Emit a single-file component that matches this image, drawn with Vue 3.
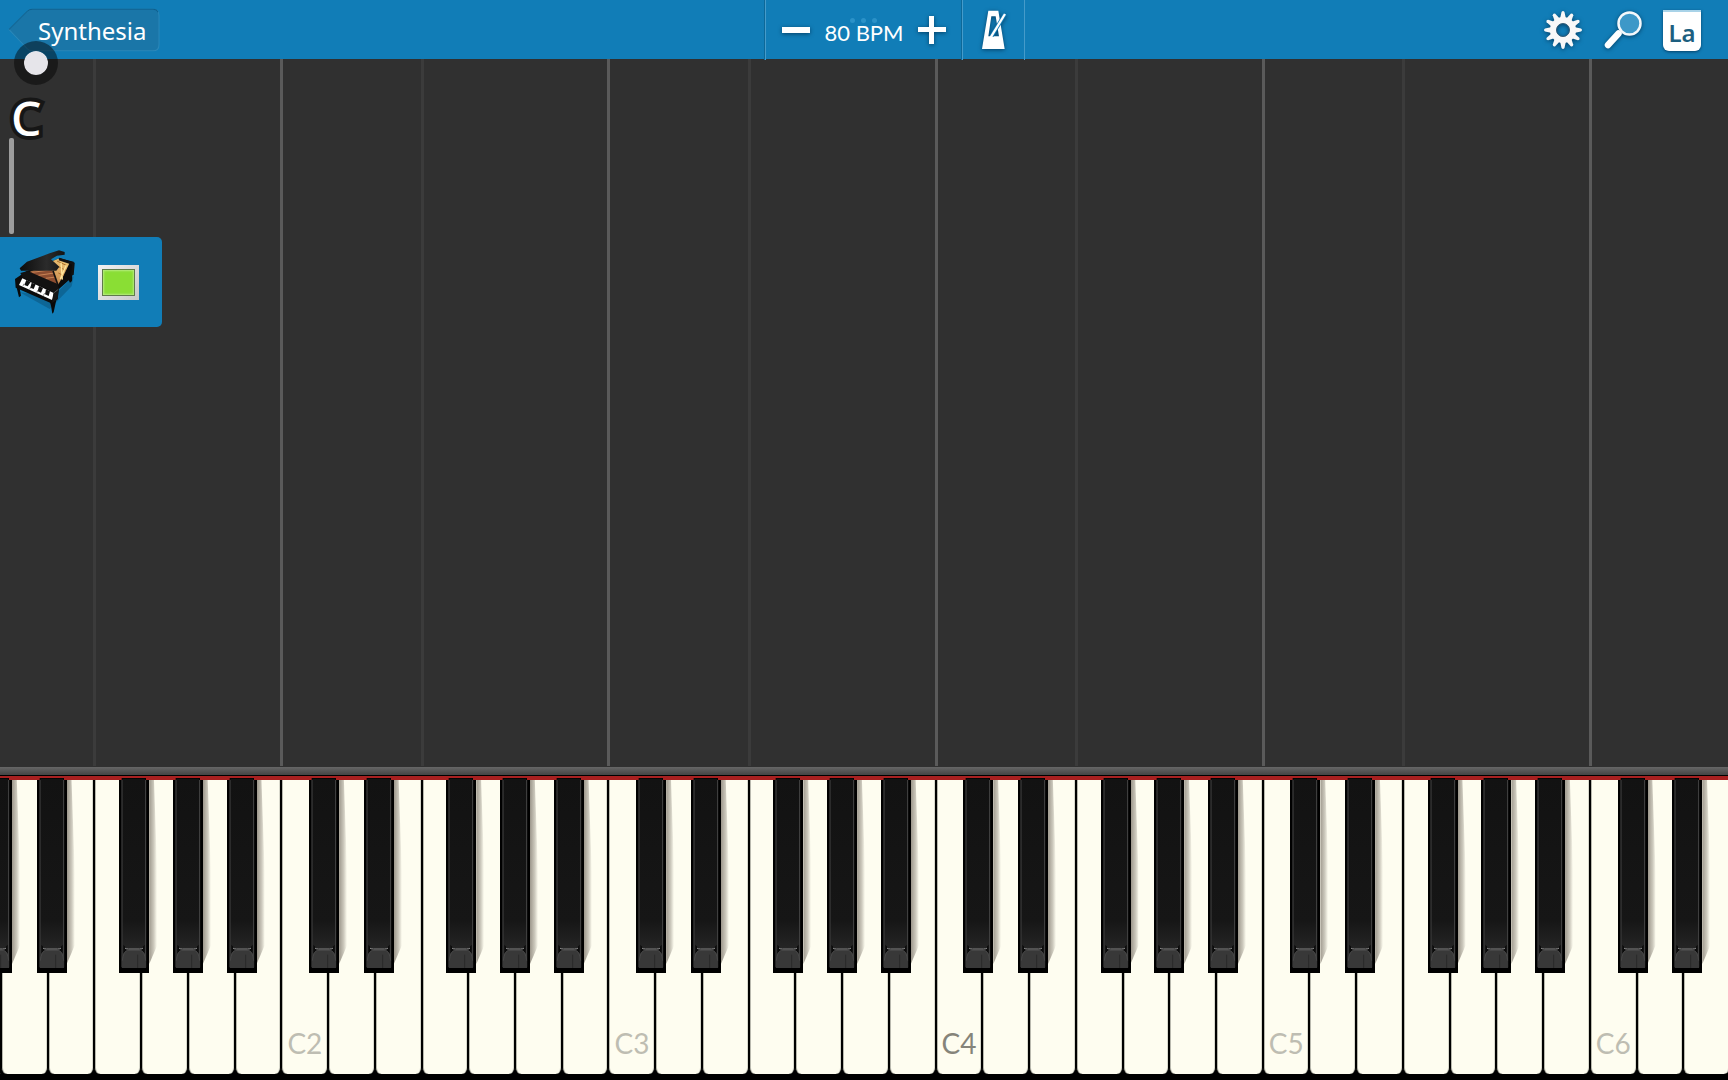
<script setup>
import { ref } from 'vue'

const bpm = ref(80)
const metronomeOn = ref(false)
const trackOn = ref(true)

const names = ['C', 'D', 'E', 'F', 'G', 'A', 'B']

// C1 is only a sliver on the left, the last key is E6
const keys = Array.from({ length: 38 }, (_, i) => {
  const name = names[i % 7]
  const octave = Math.floor(i / 7) + 1
  return {
    id: name + octave,
    name,
    octave,
    sharp: name !== 'E' && name !== 'B',
    label: name === 'C' && octave > 1 ? name + octave : ''
  }
})

// gear teeth, one every 30 degrees
const teeth = Array.from({ length: 12 }, (_, i) => i * 30)

function changeBpm(step) {
  bpm.value = Math.max(20, bpm.value + step)
}
</script>

<template>
  <div class="app">
    <header class="topbar">
      <div class="left">
        <button class="back" type="button">
          <svg class="back-shape" viewBox="0 0 150 43" aria-hidden="true">
            <path d="M1 21 L19 3 Q21 1 24 1 H143 Q149 1 149 7 V36 Q149 42 143 42 H24 Q21 42 19 40 Z" fill="#1a76a8" stroke="#2b88b9" stroke-width="1" />
            <path d="M1 21 L19 3 Q21 1 24 1 H143 Q147 1 148 4" fill="none" stroke="#0d5f8d" stroke-width="1" />
          </svg>
          <span>Synthesia</span>
        </button>
      </div>

      <div class="tempo">
        <button class="step" type="button" aria-label="Slower" @click="changeBpm(-5)">
          <svg width="28" height="28" viewBox="0 0 28 28"><path d="M0 11h28v6H0z" fill="#fff" /></svg>
        </button>
        <div class="bpm">
          <span class="dots"><i></i><i></i><i></i></span>
          <span>{{ bpm }} BPM</span>
        </div>
        <button class="step" type="button" aria-label="Faster" @click="changeBpm(5)">
          <svg width="28" height="28" viewBox="0 0 28 28"><path d="M0 11h11V0h5v11h12v5H16v12h-5V16H0z" fill="#fff" /></svg>
        </button>
      </div>

      <div class="right">
        <button class="metronome" type="button" aria-label="Metronome" @click="metronomeOn = !metronomeOn">
          <svg width="26" height="40" viewBox="692 30 78 120">
            <path fill="#fff" fill-rule="evenodd" d="M714 32H744L763 147H695ZM723 49L714 109H746L736 49Z" />
            <path d="M724 108L764 42" stroke="#117db7" stroke-width="12" />
            <path d="M721 112L764 42" stroke="#fff" stroke-width="7" />
          </svg>
        </button>
        <div class="tools">
          <button type="button" aria-label="Settings">
            <svg width="40" height="40" viewBox="-20 -20 40 40">
              <path v-for="a in teeth" :key="a" d="M-3 -11L-1.5 -18Q0 -20 1.5 -18L3 -11Z" :transform="`rotate(${a})`" fill="#f8f8f8" />
              <circle r="9.8" fill="none" stroke="#f8f8f8" stroke-width="6.5" />
              <circle r="6.5" fill="none" stroke="#355e78" stroke-width="1" />
            </svg>
          </button>
          <button type="button" aria-label="Search">
            <svg width="40" height="40" viewBox="0 0 40 40">
              <path d="M15.5 23.5L5 35" stroke="#fff" stroke-width="6.5" stroke-linecap="round" />
              <circle cx="26.5" cy="13.5" r="11" fill="#3d98c8" stroke="#f4f8fb" stroke-width="2.5" />
            </svg>
          </button>
          <button class="la" type="button">La</button>
        </div>
      </div>
    </header>

    <main class="field">
      <div class="lanes" aria-hidden="true">
        <div v-for="k in keys" :key="k.id" class="lane" :class="{ octave: k.name === 'C', fourth: k.name === 'F' }"></div>
      </div>

      <div class="chord">C</div>
      <div class="beat-line"></div>
      <section class="track">
        <svg class="piano" viewBox="40 358 192 198" role="img" aria-label="Grand piano">
          <defs>
            <linearGradient id="lid" x1="0" y1="0" x2="1" y2="0">
              <stop offset="0" stop-color="#0c0c0c" />
              <stop offset=".6" stop-color="#2b2b2b" />
              <stop offset="1" stop-color="#141414" />
            </linearGradient>
            <linearGradient id="wood" x1="0" y1="1" x2="1" y2="0">
              <stop offset="0" stop-color="#7a3f24" />
              <stop offset=".5" stop-color="#d39a5a" />
              <stop offset="1" stop-color="#f3cf7a" />
            </linearGradient>
          </defs>
          <path d="M60 488L150 538L216 470L222 440L160 500Z" fill="#0b5681" opacity=".6" />
          <path d="M206 430L218 430L217 454L211 459L207 452Z" fill="#090909" />
          <path d="M50 470L60 476L64 498L58 503L54 486Z" fill="#090909" />
          <path d="M150 514L170 510L162 548L158 552L154 528Z" fill="#090909" />
          <path d="M46 448L80 425L180 386L222 396L221 430L214 446L178 478L174 508L158 522L48 474Z" fill="#0b0b0b" />
          <path d="M84 430L150 398L176 387L210 399L192 437L176 464Z" fill="url(#wood)" />
          <path d="M84 430L150 412L168 440L172 464Z" fill="#8d4e31" />
          <path d="M98 428L158 420M116 437L164 430M138 446L168 442" stroke="#c98455" stroke-width="3" />
          <path d="M172 394L202 408M174 410L198 422M176 430L192 438" stroke="#ad6f2a" stroke-width="3" />
          <path d="M184 399L188 450M200 406L182 448" stroke="#ffe49a" stroke-width="4" />
          <path d="M60 416L82 396L150 371L178 362L195 367L195 375L172 378L154 389L179 411L170 423L64 423Z" fill="url(#lid)" />
          <path d="M178 388L221 402L218 436" fill="none" stroke="#111" stroke-width="8" />
          <path d="M160 423L174 464" stroke="#111" stroke-width="5" />
          <path d="M62 430L84 424L174 463L178 480L164 488L70 444Z" fill="#121212" />
          <path d="M68 446L162 490L157 511L58 466Z" fill="#fff" />
          <path d="M80 451L93 457L84 470L74 466Z M96 459L108 464L102 478L92 474Z M118 469L130 475L124 489L114 485Z M139 479L151 485L147 499L136 494Z" fill="#111" />
          <path d="M70 469L73 462M90 479L94 471M111 489L115 481M131 498L135 490" stroke="#555" stroke-width="2" />
          <path d="M162 489L176 479L174 508L158 520Z" fill="#161616" />
          <path d="M162 490L176 479" stroke="#777" stroke-width="2" />
        </svg>
        <button class="swatch" type="button" aria-label="Track colour" :aria-pressed="trackOn" @click="trackOn = !trackOn">
          <span></span>
        </button>
      </section>
    </main>

    <div class="pointer" aria-hidden="true"></div>

    <footer class="piano-keys">
      <div class="rail"></div>
      <div class="felt"></div>
      <div class="keys">
        <div v-for="k in keys" :key="k.id" class="key">
          <button class="white" :class="{ middle: k.octave === 4 }" type="button" :aria-label="k.id">{{ k.label }}</button>
          <button v-if="k.sharp" class="black" :class="'sharp-' + k.name.toLowerCase()" type="button" :aria-label="k.name + '#' + k.octave">
            <svg viewBox="0 0 90 585" aria-hidden="true">
              <defs>
                <linearGradient :id="'face' + k.id" x1="0" y1="0" x2="0" y2="1">
                  <stop offset="0" stop-color="#121212" />
                  <stop offset=".75" stop-color="#161616" />
                  <stop offset="1" stop-color="#303030" />
                </linearGradient>
              </defs>
              <path d="M8 0H81V6H90V585H0V6H8Z" fill="#000" />
              <path d="M10 2H79V570H10Z" :fill="'url(#face' + k.id + ')'" />
              <path d="M9 6V568M80 6V568" stroke="#4a4a4a" stroke-width="3" />
              <path d="M13 500L22 510H68L77 500V526H13Z" fill="#0c0c0c" />
              <path d="M18 510Q20 513 28 513H62Q70 513 72 510" fill="none" stroke="#9a9a9a" stroke-width="3" />
              <path d="M9 570V548Q12 518 26 516H64Q78 518 81 548V570Z" fill="#383838" />
              <path d="M10 548Q13 519 26 517H64Q77 519 80 548" fill="none" stroke="#505050" stroke-width="2" />
              <path d="M56 530V570" stroke="#222" stroke-width="2" />
            </svg>
          </button>
        </div>
      </div>
    </footer>
  </div>
</template>

<style>
body {
  background: #000;
}
</style>

<style scoped>
.app {
  position: relative;
  display: flex;
  flex-direction: column;
  min-height: 100vh;
  overflow: hidden;
  background: #303030;
  font-family: Lato, "Open Sans", sans-serif;
}

button {
  margin: 0;
  padding: 0;
  border: 0;
  background: none;
  color: inherit;
  font-family: inherit;
  cursor: pointer;
}

svg {
  display: block;
}

.topbar {
  display: grid;
  grid-template-columns: 1fr 198px 1fr;
  height: 59px;
  background: #117db7;
  color: #fff;
}

.left {
  padding: 8px;
}

.back {
  position: relative;
  display: flex;
  align-items: center;
  box-sizing: border-box;
  width: 152px;
  height: 44px;
  padding: 2px 0 0 30px;
  font-family: "Noto Sans", sans-serif;
  font-size: 24px;
  line-height: 32px;
}

.back span {
  position: relative;
}

.back-shape {
  position: absolute;
  inset: 0;
  width: 100%;
  height: 100%;
}

.tempo {
  display: flex;
  align-items: center;
  justify-content: space-between;
  box-sizing: border-box;
  padding: 0 16px;
  border-left: 1px solid #459bca;
  border-right: 1px solid #459bca;
  box-shadow: inset -2px 0 0 -1px #0d6898, -1px 0 0 #0d6898;
}

.step svg,
.metronome svg,
.tools svg {
  filter: drop-shadow(0 1px 2px rgba(0, 40, 70, 0.7));
}

.bpm {
  position: relative;
  padding-top: 6px;
  font-size: 22px;
  line-height: 28px;
}

.dots {
  position: absolute;
  top: 5px;
  left: 0;
  right: 0;
  display: flex;
  justify-content: center;
  gap: 6px;
}

.dots i {
  width: 5px;
  height: 5px;
  border-radius: 50%;
  background: #2b92c8;
}

.bpm > span:last-child {
  position: relative;
}

.right {
  display: flex;
  justify-content: space-between;
}

.metronome {
  display: flex;
  align-items: center;
  justify-content: center;
  box-sizing: border-box;
  width: 62px;
  border-right: 1px solid #459bca;
}

.tools {
  display: flex;
  align-items: center;
  gap: 20px;
  padding-right: 27px;
}

.la {
  width: 38px;
  height: 41px;
  padding-top: 4px;
  border-top: 2px solid #a9d3e8;
  border-radius: 0 0 6px 6px;
  background: #fff;
  box-shadow: 0 1px 3px rgba(0, 40, 70, 0.7);
  color: #1d5f80;
  font-family: "Noto Sans", sans-serif;
  font-size: 24px;
  font-weight: 600;
  line-height: 28px;
}

.field {
  position: relative;
  flex: 1;
  padding-top: 34px;
}

.lanes {
  position: absolute;
  inset: 0 -1px 1px -2px;
}

.lanes,
.keys {
  display: grid;
  grid-template-columns: 2px repeat(37, minmax(0, 1fr));
}

.lane.octave {
  border-left: 3px solid #5a5a5a;
}

.lane.octave:first-child {
  border: 0;
}

.lane.fourth {
  border-left: 3px solid #3b3b3b;
}

.chord {
  position: relative;
  width: 56px;
  height: 45px;
  padding-left: 11px;
  color: #fff;
  font-family: "Noto Sans", sans-serif;
  font-size: 48px;
  font-weight: 500;
  line-height: 50px;
  -webkit-text-stroke: 8px #161616;
  paint-order: stroke fill;
}

.beat-line {
  position: relative;
  width: 5px;
  height: 96px;
  margin-left: 9px;
  border-radius: 2px;
  background: #9d9d9d;
}

.track {
  position: relative;
  display: flex;
  align-items: center;
  gap: 21px;
  box-sizing: border-box;
  width: 162px;
  height: 90px;
  margin-top: 3px;
  padding-left: 13px;
  border-radius: 0 5px 5px 0;
  background: #117db7;
}

.piano {
  width: 64px;
  height: 66px;
}

.swatch {
  width: 41px;
  height: 35px;
  padding: 4px;
  background: linear-gradient(135deg, #f2f2f2, #c8c8c8);
}

.swatch span {
  display: block;
  box-sizing: border-box;
  height: 100%;
  border: 1px solid #5f7a4a;
  background: #8ade34;
  box-shadow: inset 0 0 2px 1px #b6ec80;
}

/* touch marker that floats over the top bar */
.pointer {
  position: absolute;
  top: 41px;
  left: 14px;
  box-sizing: border-box;
  width: 44px;
  height: 44px;
  border: 10px solid rgba(0, 0, 0, 0.45);
  border-radius: 50%;
  background: #e6e5ea;
  background-clip: padding-box;
}

.piano-keys {
  height: 313px;
  background: #000;
  overflow: hidden;
}

.rail {
  height: 8px;
  border-bottom: 1px solid #000;
  background: linear-gradient(#666, #444);
}

.felt {
  height: 4px;
  background: #a82020;
}

.keys {
  height: 294px;
  margin: 0 -2px 0 -1px;
}

.key {
  position: relative;
}

.white {
  display: flex;
  align-items: flex-end;
  box-sizing: border-box;
  width: 100%;
  height: 100%;
  padding: 0 0 14px 5px;
  border: 1px solid #000;
  border-width: 0 1px;
  border-radius: 0 0 6px 6px;
  background: #fefdf0;
  box-shadow: inset 1px 0 0 #b9b9ae, inset -1px 0 0 #d8d8cc;
  color: #bebdb2;
  font-size: 28px;
  line-height: 34px;
}

.key:first-child .white {
  padding: 0;
}

.white.middle {
  color: #85847a;
}

.black {
  position: absolute;
  z-index: 1;
  top: -2px;
  width: 30px;
  height: 195px;
}

.black svg {
  width: 30px;
  height: 195px;
}

.black::after {
  content: "";
  position: absolute;
  top: 2px;
  right: -8px;
  width: 8px;
  height: 184px;
  background: linear-gradient(to right, rgba(60, 50, 40, 0.5), rgba(60, 50, 40, 0.25) 60%, transparent);
  clip-path: polygon(0 0, 60% 0, 100% 50%, 100% 90%, 0 100%);
}

.sharp-c {
  right: -11px;
}

.sharp-d {
  right: -19px;
}

.sharp-f {
  right: -8px;
}

.sharp-g {
  right: -15px;
}

.sharp-a {
  right: -22px;
}
</style>
